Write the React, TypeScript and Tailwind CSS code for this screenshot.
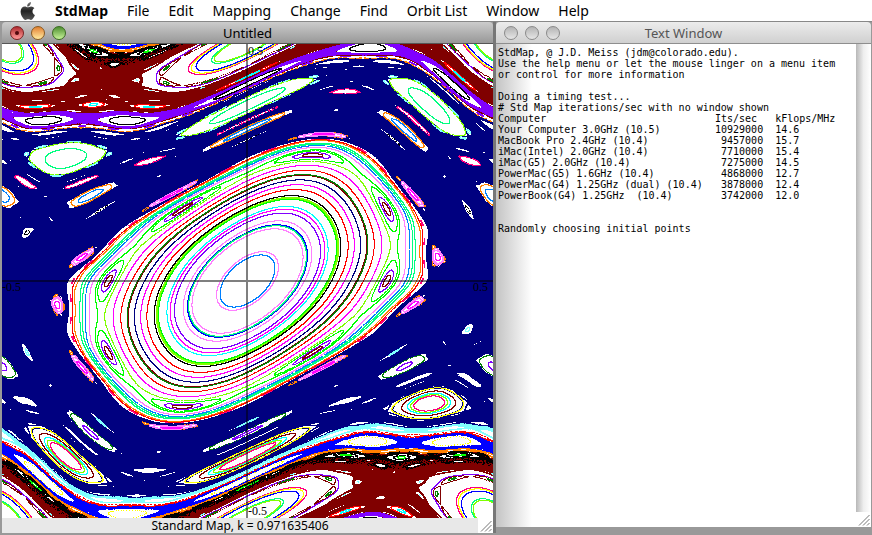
import React from 'react';

const PLOT_WIDTH = 491;
const PLOT_HEIGHT = 474;
const K = 0.971635406;

// [colour, dx, dy, iterations]: the seed is measured in plot pixels from the origin
type Orbit = [string, number, number, number];

const orbits: Orbit[] = [
  // chaotic zones
  ['#80ffff', 163, -147, 60000],
  ['#80ffff', 163, -149, 60000],
  ['#000080', -150, 80, 3000000],
  ['#000080', -162, 142, 300000],
  ['#000080', -162, 144, 300000],
  ['#000080', -162, 147, 300000],
  ['#000080', -162, 149, 300000],
  ['#000080', -162, 150, 300000],
  ['#000080', -162, 151, 300000],
  ['#000080', 166, -137, 300000],
  ['#000080', 166, -140, 300000],
  ['#000080', 166, -143, 300000],
  ['#800000', 140, -189, 1500000],
  ['#8000ff', -162, 158, 400000],
  ['#8000ff', -162, 155, 100000],
  ['#80ffff', 163, -151, 50000],
  ['#0000ff', 166, -162, 200000],
  ['#ff0000', -117, -224, 3000],
  ['#ff0000', -117, -225, 3000],
  ['#ff8000', 117, 223, 3000],
  ['#ff8000', 160, -169, 30000],
  ['#000000', 166, -172, 5000],
  ['#000000', 166, -173, 5000],
  ['#000000', 166, -174, 5000],
  ['#000000', 160, -175, 5000],

  // islands inside the rotational bands
  ['#000000', -222, 161, 4000],
  ['#ffff00', 102, -160, 4000],
  ['#00ff00', 151, -176, 3000],
  ['#ff0000', -165, 176, 3000],
  ['#00ffff', -158, 176, 2000],
  ['#80ffff', -172, 201, 2000],

  // period two islands
  ['#8000ff', 184, -211, 5000],
  ['#008000', 188, -213, 3000],
  ['#800000', 193, -222, 3000],
  ['#ff0080', 209, -221, 5000],
  ['#ffff00', 211, -221, 5000],
  ['#0000ff', 214, -222, 5000],
  ['#00ff80', 224, -229, 3000],
  ['#80ff00', 227, -234, 3000],

  // period three islands
  ['#80ffff', -223, 127, 5000],
  ['#80ff00', -217, 126, 5000],
  ['#00ff80', -161, 124, 5000],
  ['#ffff00', 216, -122, 5000],
  ['#800000', 208, -122, 5000],
  ['#00ffff', 203, -122, 5000],
  ['#80ff00', 200, -122, 5000],
  ['#ff0080', 197, -122, 5000],

  // period four and five islands
  ['#ff8000', -136, 95, 5000],
  ['#0080ff', -144, 91, 5000],
  ['#008000', 176, -76, 5000],
  ['#8000ff', 164, -81, 5000],
  ['#000000', -222, 46, 3000],
  ['#80ffff', 219, -48, 3000],
  ['#ff0080', -87, 122, 3000],

  // satellites of the central island
  ['#ff8000', -184, -23, 1500],
  ['#ff80ff', -196, -23, 5000],
  ['#ff80ff', -195, -23, 5000],
  ['#ff00ff', -193, -23, 5000],
  ['#ff8000', -169, 0, 2500],
  ['#ff0080', -175, 0, 8000],
  ['#ff0080', -174, 0, 8000],
  ['#ff0000', -172, 0, 8000],
  ['#00ff80', -164, 0, 8000],
  ['#00ff80', -161, 0, 8000],
  ['#0080ff', -158, 0, 8000],
  ['#ff80ff', -154, 0, 8000],
  ['#00ff00', -149, 0, 6000],
  ['#00ff00', -147, 0, 6000],
  ['#8000ff', -144, 0, 5000],
  ['#800000', -142, 0, 5000],

  // central island
  ['#80ff00', -129, 0, 6000],
  ['#ff00ff', -123, 0, 6000],
  ['#ff0000', -116, 0, 6000],
  ['#800000', -109, 0, 6000],
  ['#008000', -110, 0, 6000],
  ['#000080', -103, 0, 6000],
  ['#ff00ff', -97, 0, 6000],
  ['#ff0000', -91, 0, 6000],
  ['#80ff00', -82, 0, 6000],
  ['#80ff00', -81, 0, 6000],
  ['#00ff00', -80, 0, 6000],
  ['#000000', -84, 0, 6000],
  ['#00ffff', -72, 0, 6000],
  ['#ff00ff', -69, 0, 6000],
  ['#8000ff', -65, 0, 6000],
  ['#ff80ff', -57, 0, 6000],
  ['#0000ff', -53, 0, 5000],
  ['#00ff80', -52, 0, 5000],
  ['#ff80ff', -49, 0, 5000],
  ['#ff80ff', -27, 0, 4000],
  ['#0080ff', -24, 0, 4000],
];

function iterateMap(): Record<string, string> {
  const colors = Array.from(new Set(orbits.map((orbit) => orbit[0])));
  const grid = new Uint8Array(PLOT_WIDTH * PLOT_HEIGHT);

  orbits.forEach(([color, dx, dy, count]) => {
    const index = colors.indexOf(color) + 1;
    let x = dx / PLOT_WIDTH;
    let y = dy / PLOT_HEIGHT;
    for (let i = 0; i < count; i++) {
      y -= (K / (2 * Math.PI)) * Math.sin(2 * Math.PI * x);
      y -= Math.round(y);
      x += y;
      x -= Math.round(x);
      const col = Math.min(PLOT_WIDTH - 1, Math.floor((x + 0.5) * PLOT_WIDTH));
      const row = Math.min(PLOT_HEIGHT - 1, Math.floor((0.5 - y) * PLOT_HEIGHT));
      grid[row * PLOT_WIDTH + col] = index;
    }
  });

  // one path per colour, made of horizontal runs
  const paths: Record<string, string> = {};
  for (let row = 0; row < PLOT_HEIGHT; row++) {
    let col = 0;
    while (col < PLOT_WIDTH) {
      const index = grid[row * PLOT_WIDTH + col];
      const start = col;
      while (col < PLOT_WIDTH && grid[row * PLOT_WIDTH + col] === index) col++;
      if (index > 0) {
        const color = colors[index - 1];
        paths[color] = (paths[color] || '') + `M${start} ${row}h${col - start}v1h${start - col}z`;
      }
    }
  }
  return paths;
}

const mapPaths = iterateMap();

const menus = ['File', 'Edit', 'Mapping', 'Change', 'Find', 'Orbit List', 'Window', 'Help'];

const timings = [
  ['Your Computer 3.0GHz (10.5)', '10929000', '14.6'],
  ['MacBook Pro 2.4GHz (10.4)', '9457000', '15.7'],
  ['iMac(Intel) 2.0GHz (10.4)', '7710000', '15.4'],
  ['iMac(G5) 2.0GHz (10.4)', '7275000', '14.5'],
  ['PowerMac(G5) 1.6GHz (10.4)', '4868000', '12.7'],
  ['PowerMac(G4) 1.25GHz (dual) (10.4)', '3878000', '12.4'],
  ['PowerBook(G4) 1.25GHz  (10.4)', '3742000', '12.0'],
];

function AppleLogo() {
  return (
    <svg viewBox="0 0 16 18" className="h-[18px] w-4" aria-hidden="true">
      <defs>
        <linearGradient id="apple" x1="0" y1="0" x2="0" y2="1">
          <stop offset="0" stopColor="#777" />
          <stop offset="0.5" stopColor="#222" />
          <stop offset="1" stopColor="#555" />
        </linearGradient>
      </defs>
      <path
        fill="url(#apple)"
        d="M10.9 0c.2 1.300-.3 2.400-1 3.200-.7.800-1.700 1.400-2.700 1.300-.1-1.200.4-2.300 1-3C8.900.7 10 .1 10.900 0zM14.400 6.300c-1.200.7-1.900 1.800-1.900 3.200 0 1.600 1 2.900 2.400 3.400-.3 1-.8 2-1.400 2.900-.7 1-1.400 2.100-2.600 2.100-1.100 0-1.400-.7-2.700-.7-1.300 0-1.700.7-2.700.7-1.200 0-2-1.100-2.700-2.100C1.300 13.900.6 11.600.6 9.600c0-3.300 2.100-5.100 4.200-5.100 1.200 0 2.200.8 3 .8.700 0 1.900-.9 3.300-.9 1.300 0 2.500.7 3.300 1.900z"
      />
    </svg>
  );
}

function ResizeGrip() {
  return (
    <svg viewBox="0 0 15 15" className="size-[15px] shrink-0 bg-white" aria-hidden="true">
      <path d="M3 13.500L13.500 3M7 13.500L13.500 7M11 13.500l2.500-2.500" stroke="#777" strokeWidth="1" />
    </svg>
  );
}

interface TitleBarProps {
  title: string;
  active?: boolean;
}

function TitleBar({ title, active }: TitleBarProps) {
  const gray = 'from-[#b4b4b4] to-[#e6e6e6] border-[#8a8a8a]';
  const buttons = active
    ? [
        'from-[#b02830] to-[#ff9a9a] border-[#7a2020]',
        'from-[#e08030] to-[#ffeca0] border-[#8a5a20]',
        'from-[#4f9030] to-[#c8f49a] border-[#3a6a20]',
      ]
    : [gray, gray, gray];

  return (
    <div
      className={`grid h-[22px] grid-cols-[1fr_auto_1fr] items-center rounded-t border-b bg-linear-to-b ${
        active
          ? 'border-[#555] from-[#cccccc] to-[#989898]'
          : 'border-[#8e8e8e] from-[#ececec] to-[#d0d0d0]'
      }`}
    >
      <div className="flex gap-[7px] pl-2">
        {['Close', 'Minimize', 'Zoom'].map((label, i) => (
          <button
            key={label}
            aria-label={label}
            className={`flex size-[14px] items-center justify-center rounded-full border bg-linear-to-b ${buttons[i]}`}
          >
            {active && i === 0 && <span className="size-1 rounded-full bg-[#50080c]" />}
          </button>
        ))}
      </div>
      <h2 className={`text-[13px] leading-4 ${active ? 'text-black' : 'text-[#555]'}`}>{title}</h2>
    </div>
  );
}

function MapWindow() {
  return (
    <section className="border-r-3 border-l-2 border-r-[#777] border-l-[#999] bg-[#999]">
      <TitleBar title="Untitled" active />
      <svg
        viewBox={`0 0 ${PLOT_WIDTH} ${PLOT_HEIGHT}`}
        className="block w-full bg-white font-['Liberation_Serif',serif] text-[12px]"
        shapeRendering="crispEdges"
        role="img"
        aria-label="Standard map phase space"
      >
        {Object.entries(mapPaths).map(([color, d]) => (
          <path key={color} d={d} fill={color} />
        ))}
        <path d="M244 0h2v474h-2zM0 236h491v2H0z" fill="#000" fillOpacity="0.5" />
        <text x="246" y="11">0.5</text>
        <text x="246" y="471">-0.5</text>
        <text x="0" y="247">-0.5</text>
        <text x="471" y="247">0.5</text>
      </svg>
      <div className="flex h-[15px] items-center bg-[#e8e8e8]">
        <p className="flex-1 text-center text-[12px] leading-[15px]">
          Standard Map, k = 0.971635406
        </p>
        <ResizeGrip />
      </div>
    </section>
  );
}

function TextWindow() {
  return (
    <section className="flex flex-col pr-px pb-[6px]">
      <TitleBar title="Text Window" />
      <div className="flex flex-1 bg-white">
        <div className="flex-1 bg-linear-to-r from-[#c4c4c4] via-white via-10% to-white pt-[3px] pl-[2px] font-['DejaVu_Sans_Mono',monospace] text-[10px] leading-[11px] whitespace-pre text-black">
          <p>StdMap, @ J.D. Meiss (jdm@colorado.edu).</p>
          <p>Use the help menu or let the mouse linger on a menu item</p>
          <p>or control for more information</p>
          <p className="pt-[11px]">Doing a timing test...</p>
          <table className="table-fixed text-left">
            <caption className="text-left"># Std Map iterations/sec with no window shown</caption>
            <thead>
              <tr>
                <th className="w-[217px] p-0 font-normal">Computer</th>
                <th className="w-12 p-0 font-normal">Its/sec</th>
                <th className="p-0 pl-3 font-normal">kFlops/MHz</th>
              </tr>
            </thead>
            <tbody>
              {timings.map(([computer, speed, flops]) => (
                <tr key={computer}>
                  <td className="p-0">{computer}</td>
                  <td className="p-0 text-right">{speed}</td>
                  <td className="p-0 pl-3">{flops}</td>
                </tr>
              ))}
            </tbody>
          </table>
          <p className="pt-[22px]">Randomly choosing initial points</p>
        </div>
        <div className="flex w-[15px] flex-col justify-end bg-linear-to-r from-[#b8b8b8] via-[#eeeeee] to-white">
          <ResizeGrip />
        </div>
      </div>
    </section>
  );
}

export default function App() {
  return (
    <main className="min-h-screen bg-[#999] font-['Noto_Sans',sans-serif] text-black">
      <nav className="flex h-[22px] items-center gap-[19px] border-b border-[#888] bg-white pl-5 text-[14px] leading-5">
        <AppleLogo />
        <button className="font-bold">StdMap</button>
        {menus.map((menu) => (
          <button key={menu}>{menu}</button>
        ))}
      </nav>
      <div className="grid grid-cols-[496fr_376fr]">
        <MapWindow />
        <TextWindow />
      </div>
    </main>
  );
}
